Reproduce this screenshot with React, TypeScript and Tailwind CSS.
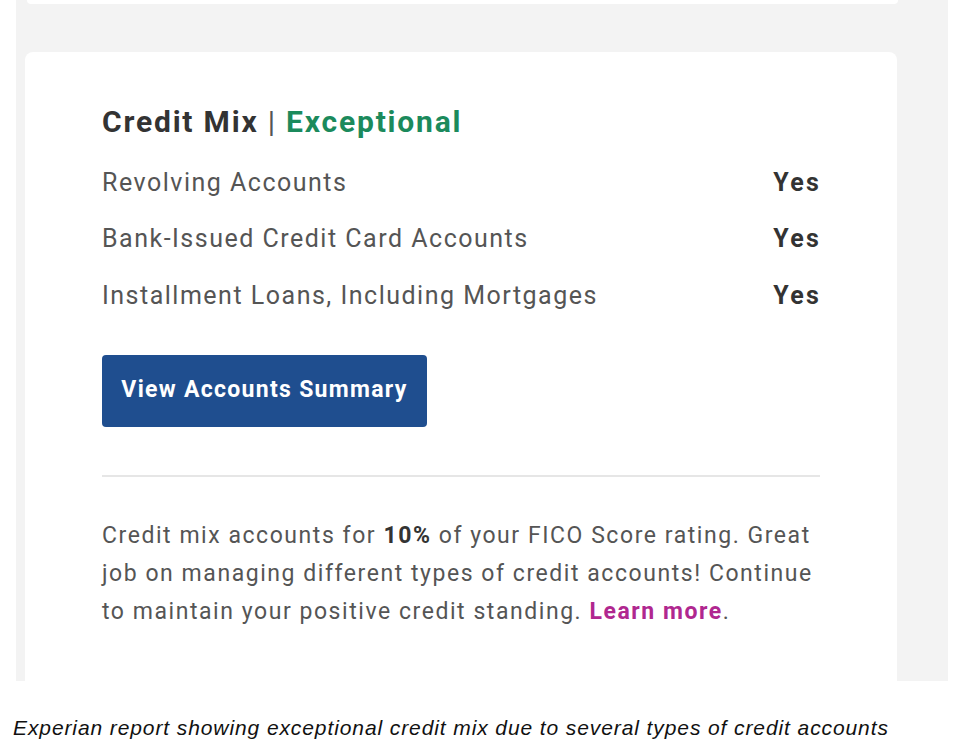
export default function App() {
  const rows = [
    'Revolving Accounts',
    'Bank-Issued Credit Card Accounts',
    'Installment Loans, Including Mortgages',
  ]

  return (
    <div className="w-[963px] h-[748px] bg-white relative overflow-hidden" style={{ fontFamily: 'Roboto, sans-serif' }}>
      <div className="ml-[16px] w-[932px] h-[681px] bg-[#f3f3f3] flex flex-col">
        <div className="ml-[11px] w-[871px] h-[4px] bg-white rounded-b-md" />
        <div className="flex flex-1 mt-[48px]">
          <div className="ml-[9px] w-[872px] bg-white rounded-t-lg pl-[77px] pt-[50px]">
            <div className="w-[717px]">
              <h2 className="text-[30px] font-bold text-[#333333] leading-[40px] tracking-[1.8px]">
                Credit Mix <span className="font-normal text-[#555]">|</span>{' '}
                <span className="text-[#1b8a5c]">Exceptional</span>
              </h2>
              <div className="mt-[12px]">
                {rows.map((r) => (
                  <div key={r} className="flex justify-between items-center h-[56.5px] text-[25px] text-[#555555] tracking-[1.5px]">
                    <span>{r}</span>
                    <span className="font-bold text-[#333333] tracking-[2.2px] -mr-[2px]">Yes</span>
                  </div>
                ))}
              </div>
              <button className="mt-[31px] w-[325px] h-[72px] bg-[#1f4e8f] rounded-[4px] text-white text-[23px] font-bold tracking-[1.3px]">
                View Accounts Summary
              </button>
              <hr className="mt-[48px] border-t-2 border-[#e6e6e6] w-[718px]" />
              <p className="mt-[40px] text-[23px] leading-[38px] text-[#555555] w-[720px] tracking-[1.55px]">
                Credit mix accounts for <b className="text-[#333]">10%</b> of your FICO Score rating. Great job on managing different types of credit accounts! Continue to maintain your positive credit standing.{' '}
                <a className="font-bold text-[#b0278f]">Learn more</a>.
              </p>
            </div>
          </div>
        </div>
      </div>
      <p className="absolute left-[13px] top-[712px] text-[21px] italic text-[#111] tracking-[0.9px]" style={{ fontFamily: '"Liberation Sans", Arial, sans-serif' }}>
        Experian report showing exceptional credit mix due to several types of credit accounts
      </p>
    </div>
  )
}
